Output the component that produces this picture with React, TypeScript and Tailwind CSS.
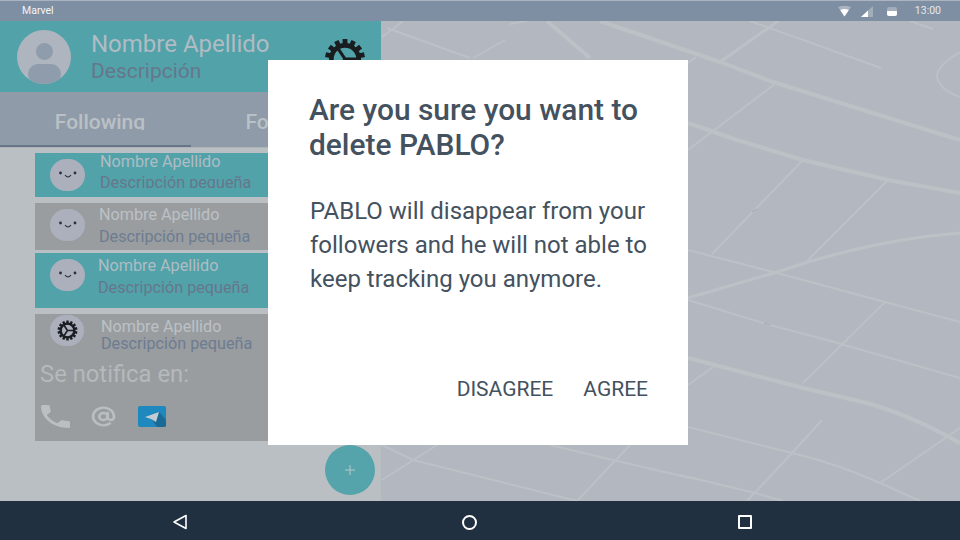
import React from 'react';
import { AtSign, Plus } from 'lucide-react';

const font = 'font-["Roboto","Liberation_Sans",sans-serif]';

const mapRoads = [
  { d: 'M382 37 L403 21', w: 2 },
  { d: 'M387 28 L470 58', w: 2 },
  { d: 'M473 58 L505 40', w: 2 },
  { d: 'M510 24 L527 21', w: 2 },
  { d: 'M547 21 L590 58', w: 4 },
  { d: 'M600 21 L720 62 L773 82 L960 140', w: 4 },
  { d: 'M720 62 L778 21', w: 3 },
  { d: 'M688 63 L696 57', w: 2 },
  { d: 'M750 21 L881 68', w: 2 },
  { d: 'M910 21 L933 29', w: 2 },
  { d: 'M960 52 Q936 66 937 77 Q940 90 960 97', w: 2 },
  { d: 'M688 123 L737 140 L803 160 L888 180 L960 193', w: 4 },
  { d: 'M775 84 L688 150', w: 2 },
  { d: 'M803 160 L712 254', w: 2 },
  { d: 'M888 180 L805 263', w: 2 },
  { d: 'M688 298 L777 272 Q870 240 960 233', w: 3 },
  { d: 'M688 250 L777 273 L885 302 L960 322', w: 2 },
  { d: 'M688 300 L770 325 L827 340 L960 378', w: 2 },
  { d: 'M885 302 L803 383', w: 2 },
  { d: 'M688 358 L803 388 L867 403 Q910 415 960 443', w: 4 },
  { d: 'M713 367 L688 385', w: 2 },
  { d: 'M822 420 L792 453 L747 501', w: 2 },
  { d: 'M688 427 L792 453 Q835 463 880 483 L920 501', w: 2 },
  { d: 'M960 428 L880 483', w: 2 },
  { d: 'M680 475 L755 493 L783 501', w: 2 },
  { d: 'M382 445 L413 460 L577 501', w: 2 },
  { d: 'M382 480 L437 445', w: 2 },
  { d: 'M550 445 L613 460 L690 478', w: 2 },
  { d: 'M577 501 L630 445', w: 2 },
];

function Smiley() {
  return (
    <div className="ml-[15px] mt-[6px] flex h-8 w-[35px] shrink-0 items-center justify-center rounded-full bg-[#abb0bc]">
      <svg width="20" height="10" viewBox="0 0 20 10" fill="none">
        <circle cx="2.5" cy="3" r="1.4" fill="#2a2f38" />
        <circle cx="17" cy="3" r="1.4" fill="#2a2f38" />
        <path d="M7 5 Q10 9 13 5" stroke="#2a2f38" strokeWidth="1.1" />
      </svg>
    </div>
  );
}

function Gear({ size, className }: { size: number; className?: string }) {
  const teeth = Array.from({ length: 14 }, (_, i) => (360 / 14) * i);
  return (
    <svg width={size} height={size} viewBox="0 0 40 40" className={className}>
      {teeth.map((deg) => (
        <rect key={deg} x="17.7" y="1" width="4.6" height="7" fill="#1a1d20" transform={`rotate(${deg} 20 20)`} />
      ))}
      <circle cx="20" cy="20" r="13" fill="none" stroke="#1a1d20" strokeWidth="4.5" />
      <path d="M20 20 L12 8 M20 20 L33 20 M20 20 L12 32" stroke="#1a1d20" strokeWidth="3" />
    </svg>
  );
}

export default function App() {
  return (
    <div className={`relative flex h-[540px] w-[960px] flex-col overflow-hidden bg-[#b3b8c0] ${font}`}>
      <div className="flex h-[21px] shrink-0 items-center border-t border-[#a9b4c0] bg-[#7f8fa3] pl-[22px] pr-[19px] text-[10.5px] text-[#f2f4f6]">
        <span>Marvel</span>
        <div className="ml-auto flex items-center">
          <svg width="13" height="11" viewBox="0 0 13 11" className="mr-[10px]">
            <path d="M0 1 Q6.5 -1.5 13 1 L6.5 10.5 Z" fill="#aab4c0" />
            <path d="M2.2 4 Q6.5 2.2 10.8 4 L6.5 10.5 Z" fill="#ffffff" />
          </svg>
          <svg width="12" height="11" viewBox="0 0 12 11" className="mr-[14px]">
            <path d="M0 11 L12 0 V11 Z" fill="#a3aebb" />
            <path d="M0 11 L7 4.6 V11 Z" fill="#ffffff" />
          </svg>
          <div className="mr-[18px] flex h-[9px] w-[10px] flex-col overflow-hidden rounded-[2px] bg-[#a3aebb]">
            <div className="mt-auto h-[5px] bg-white" />
          </div>
          <span className="text-[#e4e8ec]">13:00</span>
        </div>
      </div>

      <div className="flex min-h-0 flex-1">
        <div className="flex w-[381px] shrink-0 flex-col bg-[#b9bfc3]">
          <div className="flex h-[71px] shrink-0 items-center bg-[#52a2aa] pl-[17px]">
            <div className="relative h-[54px] w-[54px] shrink-0 overflow-hidden rounded-full bg-[#aeb5bf]">
              <div className="mx-auto mt-[13px] h-[17px] w-[17px] rounded-full bg-[#8f9cab]" />
              <div className="mx-auto mt-[4px] h-[20px] w-[33px] rounded-full bg-[#8f9cab]" />
            </div>
            <div className="ml-[20px] flex flex-col">
              <span className="text-[24px] leading-[29px] text-[#b0bcc3]">Nombre Apellido</span>
              <span className="text-[21px] leading-[24px] text-[#66778a]">Descripción</span>
            </div>
            <Gear size={42} className="ml-[54px] mt-[4px]" />
          </div>
          <div className="flex h-[56px] shrink-0 border-b border-[#adb3b8] bg-[#8f9ba8] text-[21px] font-medium text-[#bac1c6]">
            <div className="flex w-[191px] justify-center border-b-[2px] border-[#66778a] pl-[9px] pt-[18px]">
              <span className="h-[20px] overflow-hidden leading-[25px]">Following</span>
            </div>
            <div className="flex flex-1 justify-center pl-[10px] pt-[18px]">
              <span className="h-[20px] overflow-hidden leading-[25px]">Followers</span>
            </div>
          </div>

          <div className="relative ml-[35px] flex min-h-0 flex-1 flex-col">
            <div className="mt-[5px] flex h-[44px] w-[233px] bg-[#52a2aa]">
              <Smiley />
              <div className="ml-[15px] flex flex-col text-[16.2px]">
                <span className="h-[18px] leading-[18px] text-[#b0bcc3]">Nombre Apellido</span>
                <span className="mt-[2px] h-[15px] overflow-hidden leading-[20px] text-[#66778a]">Descripción pequeña</span>
              </div>
            </div>
            <div className="mt-[6px] flex h-[47px] w-[233px] bg-[#999da0]">
              <Smiley />
              <div className="ml-[14px] mt-[3px] flex flex-col text-[16.2px]">
                <span className="h-[18px] leading-[18px] text-[#bcc1c5]">Nombre Apellido</span>
                <span className="mt-[3px] leading-[20px] text-[#6d7c90]">Descripción pequeña</span>
              </div>
            </div>
            <div className="mt-[3px] flex h-[55px] w-[233px] bg-[#52a2aa]">
              <Smiley />
              <div className="ml-[13px] mt-[4px] flex flex-col text-[16.2px]">
                <span className="h-[18px] leading-[18px] text-[#b0bcc3]">Nombre Apellido</span>
                <span className="mt-[3px] leading-[20px] text-[#66778a]">Descripción pequeña</span>
              </div>
            </div>
            <div className="mt-[6px] flex h-[127px] w-[233px] flex-col bg-[#999da0]">
              <div className="flex">
                <div className="ml-[15px] mt-[1px] flex h-[31px] w-[34px] shrink-0 items-center justify-center rounded-full bg-[#abb0bc]">
                  <Gear size={21} />
                </div>
                <div className="ml-[17px] mt-[4px] flex flex-col text-[16.2px]">
                  <span className="h-[17px] leading-[18px] text-[#bcc1c5]">Nombre Apellido</span>
                  <span className="h-[17px] leading-[17px] text-[#6d7c90]">Descripción pequeña</span>
                </div>
              </div>
              <span className="ml-[5px] mt-[8px] text-[23.8px] leading-[28px] text-[#b4b9bc]">Se notifica en:</span>
              <div className="ml-[6px] mt-[17px] flex items-center">
                <svg width="29" height="23" viewBox="3 3 18 18" preserveAspectRatio="none" fill="#b9bfc3">
                  <path d="M6.62 10.79c1.44 2.83 3.76 5.14 6.59 6.59l2.2-2.2c.27-.27.67-.36 1.02-.24 1.12.37 2.33.57 3.57.57.55 0 1 .45 1 1V20c0 .55-.45 1-1 1-9.39 0-17-7.61-17-17 0-.55.45-1 1-1h3.5c.55 0 1 .45 1 1 0 1.25.2 2.45.57 3.57.11.35.03.74-.25 1.02l-2.2 2.2z" />
                </svg>
                <AtSign className="ml-[21px] h-[21px] w-[25px]" preserveAspectRatio="none" stroke="#b9bfc3" strokeWidth={2.6} />
                <div className="ml-[22px] h-[21px] w-[28px] overflow-hidden rounded-[2px] bg-[#1e88bf]">
                  <svg width="28" height="21" viewBox="0 0 28 21">
                    <path d="M13 12 L21 6 L28 14 V21 H19 Z" fill="#1a6a96" />
                    <path d="M7 11 L21 6 L18 16 L13 13 Z" fill="#c3ccd2" />
                  </svg>
                </div>
              </div>
            </div>
            <div className="absolute bottom-[6px] right-[6px] flex h-[50px] w-[50px] items-center justify-center rounded-full bg-[#55a4ab] text-[#b9c6ca]">
              <Plus size={16} strokeWidth={1.5} />
            </div>
          </div>
        </div>

        <svg className="min-w-0 flex-1" viewBox="381 21 579 480" width="579" height="480" fill="none">
          {mapRoads.map((road) => (
            <path key={road.d} d={road.d} stroke="#bcc1c6" strokeWidth={road.w} />
          ))}
          <path d="M752 212 L757 209 M764 323 L770 325" stroke="#a3a8ae" strokeWidth="1" />
        </svg>
      </div>

      <div className="flex h-[39px] shrink-0 items-center bg-[#203040] pt-[3px]">
        <svg width="16" height="16" viewBox="0 0 16 16" className="ml-[172px]" fill="none">
          <path d="M14 1.5 V14.5 L2 8 Z" stroke="#fff" strokeWidth="1.6" strokeLinejoin="round" />
        </svg>
        <div className="ml-[274px] h-[15px] w-[15px] rounded-full border-2 border-white" />
        <div className="ml-[261px] h-[14px] w-[14px] rounded-[1px] border-2 border-white" />
      </div>

      <div className="absolute left-[268px] top-[60px] flex h-[385px] w-[420px] flex-col bg-white text-[#44515e]">
        <h2 className="ml-[41px] mt-[32px] text-[29.9px] font-medium leading-[35px]">
          Are you sure you want to
          <br />
          delete PABLO?
        </h2>
        <p className="ml-[42px] mt-[32px] text-[24px] leading-[34px]">
          PABLO will disappear from your
          <br />
          followers and he will not able to
          <br />
          keep tracking you anymore.
        </p>
        <div className="mb-[43px] mr-[40px] mt-auto flex justify-end gap-[30px] text-[21px] leading-[26px]">
          <span>DISAGREE</span>
          <span>AGREE</span>
        </div>
      </div>
    </div>
  );
}
